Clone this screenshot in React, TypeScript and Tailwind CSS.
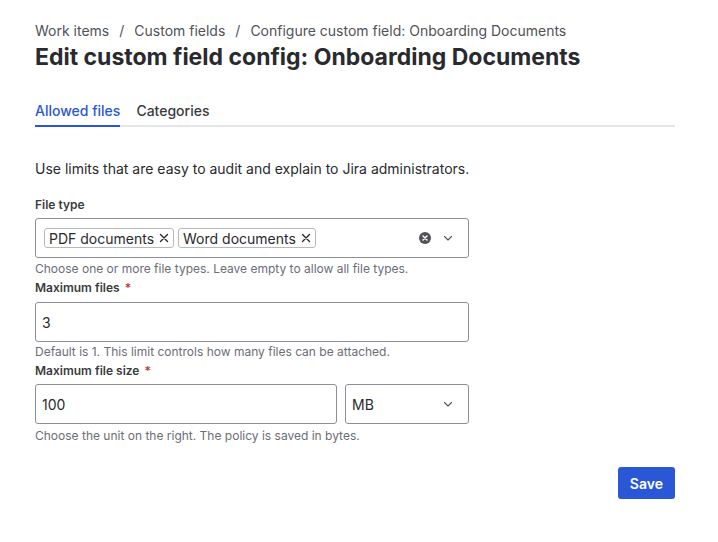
import React, { useState } from 'react';

const Chevron = () => (
    <svg width="12" height="12" viewBox="0 0 12 12" fill="none" className="text-[#505258]">
        <path d="M2.5 4.5 6 8l3.5-3.5" stroke="currentColor" strokeWidth="1.1" strokeLinecap="round" strokeLinejoin="round" />
    </svg>
);

const ClearIcon = () => (
    <svg width="12" height="12" viewBox="0 0 12 12">
        <circle cx="6" cy="6" r="6" fill="#505258" />
        <path d="M4 4l4 4M8 4l-4 4" stroke="#fff" strokeWidth="1.5" strokeLinecap="round" />
    </svg>
);

const Tag: React.FC<{ label: string }> = ({ label }) => (
    <span className="flex items-center gap-[5px] h-[20px] px-[4px] border border-[#b7b9be] rounded-[3px] text-[14px] text-[#292a2e]">
        {label}
        <svg width="10" height="10" viewBox="0 0 10 10">
            <path d="M1.5 1.5l7 7M8.5 1.5l-7 7" stroke="#292a2e" strokeWidth="1.4" strokeLinecap="round" />
        </svg>
    </span>
);

export default function App() {
    const [maxFiles, setMaxFiles] = useState('3');
    const [maxSize, setMaxSize] = useState('100');

    return (
        <div className="w-[718px] h-[542px] bg-white pl-[35px] pt-[21px] text-[#292a2e]" style={{ fontFamily: 'Inter, "Noto Sans", sans-serif' }}>
            <div className="w-[640px]">
                {/* Breadcrumbs */}
                <div className="flex items-center gap-[10px] text-[14px] leading-[20px] text-[#505258]">
                    <span>Work items</span>
                    <span>/</span>
                    <span>Custom fields</span>
                    <span>/</span>
                    <span>Configure custom field: Onboarding Documents</span>
                </div>
                <h1 className="mt-[2px] text-[23px] leading-[28px] font-bold text-[#292a2e]">
                    Edit custom field config: Onboarding Documents
                </h1>

                {/* Tabs */}
                <div className="mt-[30px] flex gap-[16px] border-b-2 border-[#e4e5e8]">
                    <div className="-mb-[2px] pb-[4px] border-b-2 border-[#2a57d5] text-[14px] leading-[20px] font-medium text-[#2a57d5]">
                        Allowed files
                    </div>
                    <div className="-mb-[2px] pb-[4px] border-b-2 border-transparent text-[14px] leading-[20px] font-medium text-[#3a3b40]">
                        Categories
                    </div>
                </div>

                <p className="mt-[32px] text-[14px] leading-[20px]">
                    Use limits that are easy to audit and explain to Jira administrators.
                </p>

                <div className="w-[434px]">
                    {/* File type */}
                    <div className="mt-[18px] text-[12px] leading-[16px] font-semibold text-[#3a3b40]">File type</div>
                    <div className="mt-[5px] h-[40px] flex items-center border border-[#8c8f97] rounded-[3px] pl-[8px] pr-[14px]">
                        <div className="flex gap-[4px] flex-1">
                            <Tag label="PDF documents" />
                            <Tag label="Word documents" />
                        </div>
                        <div className="flex items-center gap-[11px]">
                            <ClearIcon />
                            <Chevron />
                        </div>
                    </div>
                    <div className="mt-[3px] text-[12px] leading-[16px] text-[#6b6e76]">
                        Choose one or more file types. Leave empty to allow all file types.
                    </div>

                    {/* Maximum files */}
                    <div className="mt-[3px] text-[12px] leading-[16px] font-semibold text-[#3a3b40]">
                        Maximum files <span className="ml-[2px] text-[#c9372c]">*</span>
                    </div>
                    <input
                        value={maxFiles}
                        onChange={(e) => setMaxFiles(e.target.value)}
                        className="mt-[6px] w-full h-[40px] border border-[#8c8f97] rounded-[3px] px-[6px] text-[14px] text-[#292a2e] outline-none"
                    />
                    <div className="mt-[2px] text-[12px] leading-[16px] text-[#6b6e76]">
                        Default is 1. This limit controls how many files can be attached.
                    </div>

                    {/* Maximum file size */}
                    <div className="mt-[3px] text-[12px] leading-[16px] font-semibold text-[#3a3b40]">
                        Maximum file size <span className="ml-[2px] text-[#c9372c]">*</span>
                    </div>
                    <div className="mt-[5px] flex gap-[8px]">
                        <input
                            value={maxSize}
                            onChange={(e) => setMaxSize(e.target.value)}
                            className="w-[302px] h-[40px] border border-[#8c8f97] rounded-[3px] px-[6px] text-[14px] text-[#292a2e] outline-none"
                        />
                        <div className="flex-1 h-[40px] flex items-center justify-between border border-[#8c8f97] rounded-[3px] pl-[6px] pr-[14px] text-[14px]">
                            <span>MB</span>
                            <Chevron />
                        </div>
                    </div>
                    <div className="mt-[4px] text-[12px] leading-[16px] text-[#6b6e76]">
                        Choose the unit on the right. The policy is saved in bytes.
                    </div>
                </div>

                {/* Actions */}
                <div className="mt-[23px] flex justify-end">
                    <button className="h-[32px] px-[12px] rounded-[3px] bg-[#2a57d5] text-white text-[14px] font-semibold">
                        Save
                    </button>
                </div>
            </div>
        </div>
    );
}
